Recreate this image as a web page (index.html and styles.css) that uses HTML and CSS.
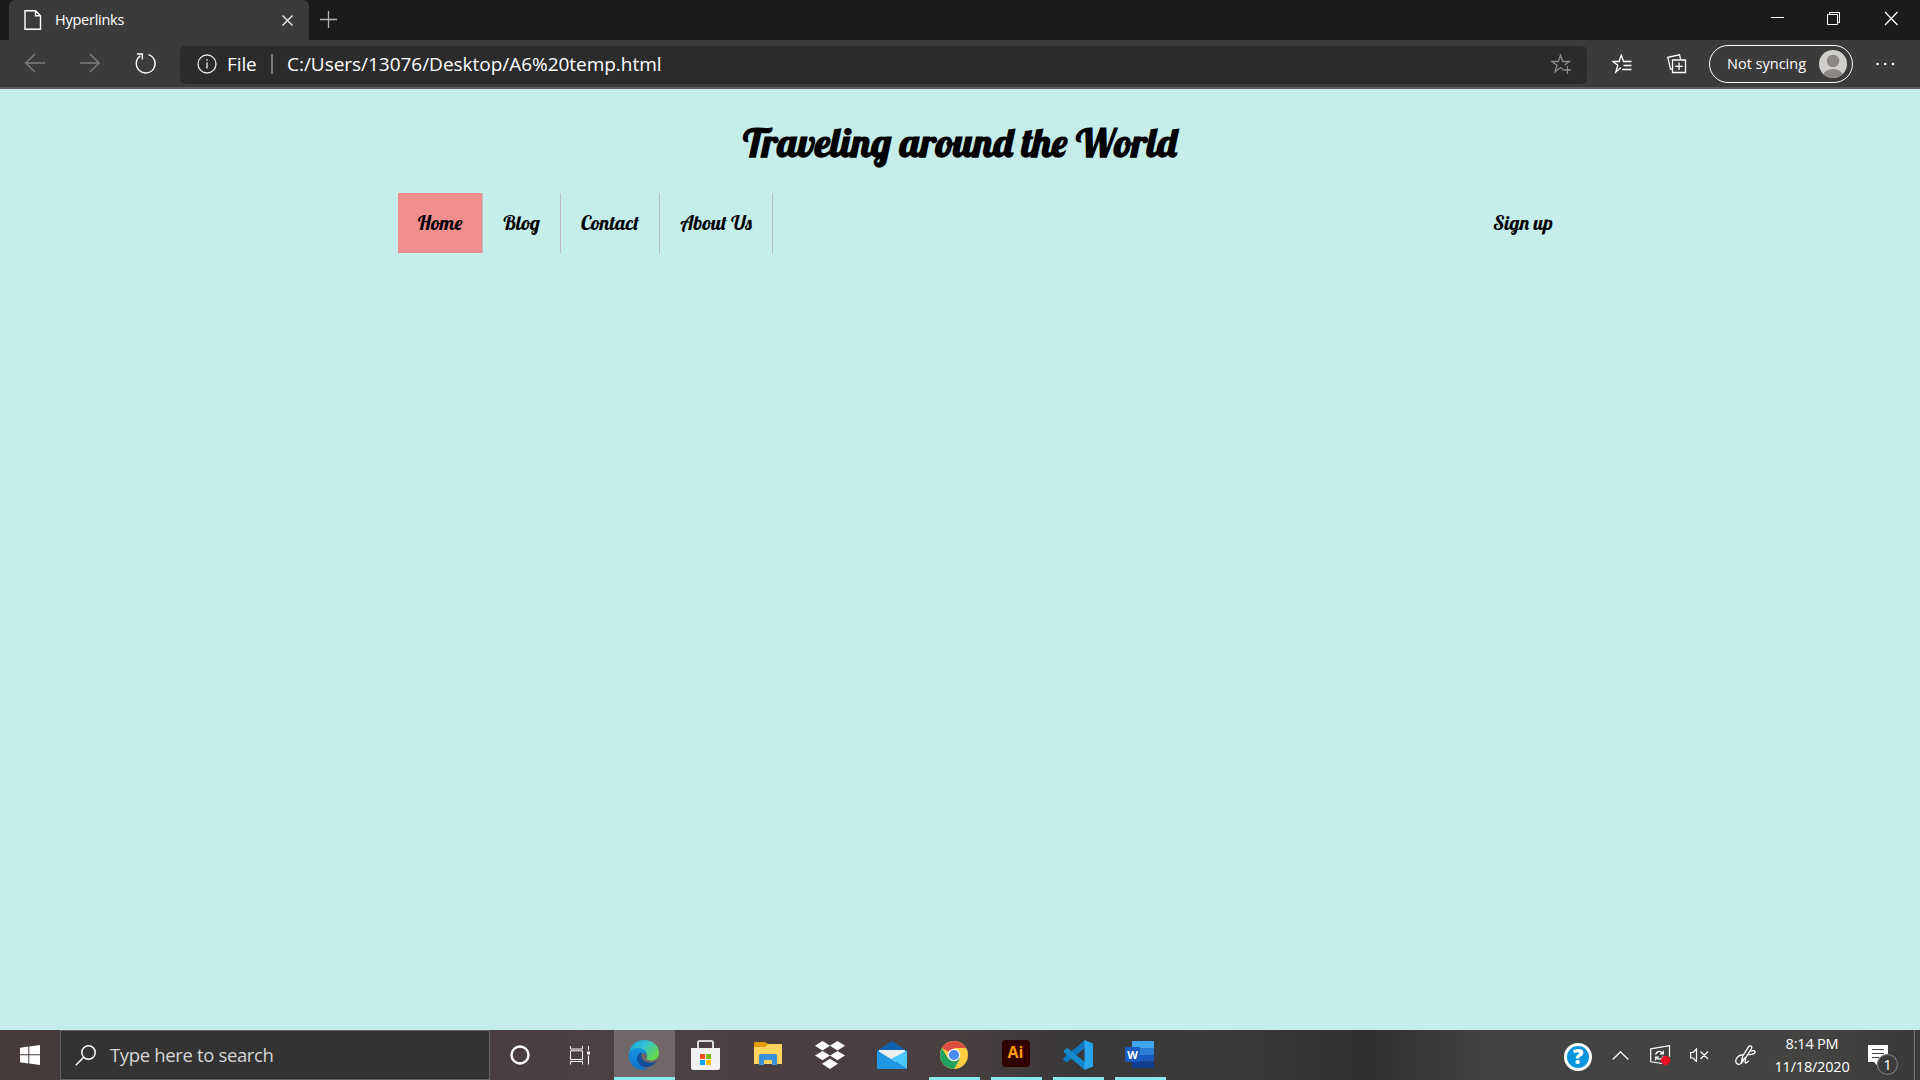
FILE: index.html
```html
<!DOCTYPE html>
<html lang="en">
<head>
<meta charset="utf-8">
<title>Hyperlinks</title>
<link rel="stylesheet" href="styles.css">
</head>
<body>
<header class="tabstrip">
  <div class="tab">
    <svg class="tab-icon" width="18" height="20" viewBox="0 0 18 20"><path d="M1 .8h10.5l5 5V19.2H1zM11.5.8v5h5" fill="none" stroke="#fff" stroke-width="1.4"/></svg>
    <span class="tab-title">Hyperlinks</span>
    <svg class="tab-close" width="11" height="11" viewBox="0 0 11 11"><path d="M.5.5l10 10M10.500.500l-10 10" stroke="#f2f2f2" stroke-width="1.3"/></svg>
  </div>
  <svg class="new-tab" width="17" height="17" viewBox="0 0 17 17"><path d="M0 8.500h17M8.500 0v17" stroke="#b4b4b4" stroke-width="1.3"/></svg>
  <div class="window-controls">
    <svg width="57" height="40" viewBox="0 0 57 40"><path d="M22 17.500h13" stroke="#fff"/></svg>
    <svg width="57" height="40" viewBox="0 0 57 40"><path d="M21.500 14.500h10v10h-10zM23.500 14v-1.500h10v10H32" fill="none" stroke="#fff"/></svg>
    <svg width="57" height="40" viewBox="0 0 57 40"><path d="M22 12l12.500 13M34.500 12L22 25" stroke="#fff" stroke-width="1.200"/></svg>
  </div>
</header>
<div class="toolbar">
  <svg class="tool" width="55" height="47" viewBox="0 0 55 47"><path d="M37 23H17.500M27 14l-9.200 9 9.200 9" fill="none" stroke="#7d7d7d" stroke-width="1.400"/></svg>
  <svg class="tool" width="55" height="47" viewBox="0 0 55 47"><path d="M17 23h19.500M27 14l9.200 9-9.200 9" fill="none" stroke="#7d7d7d" stroke-width="1.400"/></svg>
  <svg class="tool" width="55" height="47" viewBox="0 0 55 47"><path d="M30.500 14.600a9.400 9.400 0 1 1-8.200 1.300M19 14h5.300v5.600" fill="none" stroke="#fff" stroke-width="1.400"/></svg>
  <div class="address">
    <svg class="info" width="20" height="20" viewBox="0 0 20 20"><circle cx="10" cy="10" r="9" fill="none" stroke="#e8e8e8" stroke-width="1.300"/><path d="M10 8.500v6M10 5.200v1.600" stroke="#e8e8e8" stroke-width="1.400"/></svg>
    <span class="scheme">File</span>
    <span class="divider"></span>
    <span class="url">C:/Users/13076/Desktop/A6%20temp.html</span>
    <svg class="add-favorite" width="20" height="20" viewBox="0 0 20 20"><path d="M12.500 16L9.500 13.500 4 18l2-6.700L.8 7.500h6.500L9.500 1l2.200 6.500h6.500l-4.500 3.500M16.500 12v8M12.500 16h7.500" fill="none" stroke="#8b8b8b" stroke-width="1.300"/></svg>
  </div>
  <svg class="favorites" width="20" height="20" viewBox="0 0 20 20"><path d="M9 13.500L3.800 18l2-6.700L.8 7.500h6.300L9.300 1l2.200 6.500H19.500M11.500 11.500h8M10 15.500h9.500" fill="none" stroke="#fff" stroke-width="1.300"/></svg>
  <svg class="collections" width="20" height="20" viewBox="0 0 20 20"><path d="M5.500 6h13v12.500h-13zM12 8.500v7.500M8.200 12.300h7.600M5 15.200H3.500L.8 3.300 12.500.8l1 4" fill="none" stroke="#fff" stroke-width="1.300"/></svg>
  <div class="profile">
    <span class="profile-label">Not syncing</span>
    <svg width="28" height="28" viewBox="0 0 28 28"><defs><clipPath id="avatar"><circle cx="14" cy="14" r="14"/></clipPath></defs><g clip-path="url(#avatar)"><path d="M0 0h28v28H0z" fill="#d0cecb"/><circle cx="14" cy="11" r="6.200" fill="#8b8785"/><ellipse cx="14" cy="26" rx="10" ry="7" fill="#8b8785"/></g></svg>
  </div>
  <svg class="more" width="19" height="4" viewBox="0 0 19 4"><circle cx="1.600" cy="2" r="1.300" fill="#fff"/><circle cx="9.200" cy="2" r="1.300" fill="#fff"/><circle cx="16.900" cy="2" r="1.300" fill="#fff"/></svg>
</div>
<main class="page">
  <h1 class="heading">Traveling around the World</h1>
  <nav class="menu">
    <a class="menu-item home">Home</a>
    <a class="menu-item blog">Blog</a>
    <a class="menu-item contact">Contact</a>
    <a class="menu-item about">About Us</a>
    <a class="menu-item signup">Sign up</a>
  </nav>
</main>
<footer class="taskbar">
  <div class="start"><svg width="20" height="20" viewBox="0 0 20 20"><path d="M0 2.800L8.300 1.600V9.300H0zM9.300 1.500L20 0v9.300H9.300zM0 10.300h8.300V18.400L0 17.300zM9.300 10.300H20V20L9.300 18.600z" fill="#fff"/></svg></div>
  <div class="search">
    <svg width="21" height="21" viewBox="0 0 21 21"><circle cx="13.500" cy="7.500" r="6.700" fill="none" stroke="#fff" stroke-width="1.500"/><path d="M8.700 12.300L.7 20.300" stroke="#fff" stroke-width="1.500"/></svg>
    <span class="search-text">Type here to search</span>
  </div>
  <div class="task cortana"><svg width="20" height="20" viewBox="0 0 20 20"><circle cx="10" cy="10" r="8.500" fill="none" stroke="#fff" stroke-width="2.400"/></svg></div>
  <div class="task view"><svg width="21" height="20" viewBox="0 0 21 20"><path d="M.5 1v3h12V1M.5 5.800h12v8.700H.5zM.5 19.500v-3h12v3M18.500 1v4M18.500 10.500v9" fill="none" stroke="#fff"/><path d="M17 6.500h3v3h-3z" fill="#fff"/></svg></div>
  <div class="app active">
    <svg width="30" height="30" viewBox="0 0 30 30"><defs><linearGradient id="edge-top" x1="0" y1="0" x2="1" y2=".6"><stop offset="0" stop-color="#159bd8"/><stop offset=".5" stop-color="#35c2d2"/><stop offset="1" stop-color="#66db49"/></linearGradient><linearGradient id="edge-side" x1="0" y1="0" x2="0" y2="1"><stop offset="0" stop-color="#1595df"/><stop offset="1" stop-color="#0872c9"/></linearGradient></defs><path d="M0 14C1 5 7 0 15 0c9 0 15 6 15 13 0 5-4 7.500-8 7.500-3 0-5-1-4.700-2.200 1.600-1.300 1.200-6.300-2.300-7.300C9 7 3 9 0 14z" fill="url(#edge-top)"/><path d="M0 16C0 10 5 8 9 8c5 0 9 3 9 7-2-3-7-2-8 2-.8 5 2 11 9 12C9 32 0 26 0 16z" fill="url(#edge-side)"/><path d="M13 12c-5 2-7 8-2 13 5 4.500 13 2 17-4-4 2.500-12 2.500-15-2.500-1-2-1-4.500 0-6.500z" fill="#114d9b"/></svg>
  </div>
  <div class="app">
    <svg width="29" height="30" viewBox="0 0 29 30"><path d="M7 9V2.500Q7 1 8.500 1h12Q22 1 22 2.500V9" fill="none" stroke="#d8d8d8" stroke-width="2"/><path d="M0 8h29v20q0 2-2 2H2q-2 0-2-2z" fill="#f2f2f2"/><path d="M9 14h5v5H9z" fill="#f25022"/><path d="M15 14h5v5h-5z" fill="#7fba00"/><path d="M9 20h5v5H9z" fill="#00a4ef"/><path d="M15 20h5v5h-5z" fill="#ffb900"/></svg>
  </div>
  <div class="app">
    <svg class="raise" width="28" height="24" viewBox="0 0 28 24"><path d="M0 1q0-1 1-1h10l3 2h13q1 0 1 1v5H0z" fill="#e09c00"/><path d="M0 5h11l3-3h13q1 0 1 1v19H0z" fill="#ffd45e"/><path d="M5 23V13.500Q5 12 6.500 12h15q1.500 0 1.500 1.500V23h-5v-5h-8v5z" fill="#3b92d7"/></svg>
  </div>
  <div class="app">
    <svg width="30" height="28" viewBox="0 0 30 28"><path d="M7.500 0l7.500 4.700L7.500 9.400 0 4.700zM22.500 0L30 4.700l-7.500 4.700L15 4.700zM7.500 9.900l7.500 4.700-7.500 4.700L0 14.600zM22.500 9.900l7.500 4.700-7.500 4.700-7.500-4.700zM15 17.800l8 5L15 28l-8-5.200z" fill="#fff"/></svg>
  </div>
  <div class="app">
    <svg width="30" height="28" viewBox="0 0 30 28"><path d="M0 10L14 .5q1-.7 2 0L30 10v5H0z" fill="#1060b0"/><path d="M2 9h26v12H2z" fill="#f0f0f0"/><path d="M0 9.500L15 19 0 28z" fill="#229be5"/><path d="M30 9.500V28L14 18z" fill="#48c8ff"/><path d="M0 28V9.500L30 28z" fill="#1e97e4"/></svg>
  </div>
  <div class="app running">
    <svg width="28" height="28" viewBox="0 0 28 28"><circle cx="14" cy="14" r="14" fill="#ffcd40"/><path d="M14 14L1.900 7A14 14 0 0 1 26.100 7H14z" fill="#dc4e41"/><path d="M1.900 7A14 14 0 0 0 14 28l6.100-10.500L8 17.500z" fill="#20a15f"/><circle cx="14" cy="14" r="6.300" fill="#f4f4f4"/><circle cx="14" cy="14" r="5.100" fill="#4b8bf4"/></svg>
  </div>
  <div class="app running"><span class="illustrator">Ai</span></div>
  <div class="app running">
    <svg width="30" height="30" viewBox="0 0 30 30"><path d="M22 8L3.500 22.500 0 19.500Q0 18.500 1 17.500L22 0z" fill="#0b77bf"/><path d="M1 12.500Q0 11.500 1 10.500l2-2q1-.7 2 0L22 22v8z" fill="#1589ce"/><path d="M21.500 0L30 3.500v23L21.500 30z" fill="#27a5ed"/></svg>
  </div>
  <div class="app running">
    <svg class="word" width="30" height="27" viewBox="0 0 30 27"><path d="M7 1q0-1 1-1h20q1 0 1 1v6H7z" fill="#41a5ee"/><path d="M7 7h22v7H7z" fill="#2b7cd3"/><path d="M7 14h22v6.500H7z" fill="#185abd"/><path d="M7 20.500h22V26q0 1-1 1H8q-1 0-1-1z" fill="#103f91"/><rect x="0" y="6" width="15" height="15" rx="1.200" fill="#185abd"/><text class="word-letter" x="7.500" y="17.500" text-anchor="middle">W</text></svg>
  </div>
  <div class="tray">
    <div class="help">?</div>
    <svg class="chevron" width="17" height="9" viewBox="0 0 17 9"><path d="M.7 8.500l7.800-7.700 7.800 7.700" fill="none" stroke="#fff" stroke-width="1.300"/></svg>
    <svg class="update" width="21" height="21" viewBox="0 0 21 21"><path d="M12 18.500L.7 16.800V3.800L19.500.7v11" fill="none" stroke="#fff" stroke-width="1.200"/><path d="M5.500 9.500Q7 6 10.500 6.500l2.500 2M13.300 5.500v3.300H10M13.500 11q-2 4-5.500 3l-2-1.500M5.700 15.500v-3.300H9" fill="none" stroke="#fff" stroke-width="1.200"/><circle cx="15.500" cy="15.500" r="4.700" fill="#e81123"/></svg>
    <svg class="volume" width="19" height="14" viewBox="0 0 19 14"><path d="M.6 4.500h2.500L6.500 1v12.500L3.100 10H.6zM10.500 3.500l7.500 7.500M18 3.500L10.500 11" fill="none" stroke="#fff" stroke-width="1.200"/></svg>
    <svg class="pen" width="21" height="21" viewBox="0 0 21 21"><path d="M6.500 16.500L7.500 11.500 13.500 1.800q1-1.500 2.500-.7 1.300 1 .5 2.400L10.500 13zM7.500 9.500C2.500 10.500.5 14 .8 16.500c.5 3.800 5 3.800 6.700.5 1.500-3 2-5 3-4 .8 1-1.500 4.500 0 5 1.500.3 2-1.500 3.500-2M14.500 6.500c3-1.500 6-1 5.500.8-.5 1.700-4 2.700-6.500 2.200" fill="none" stroke="#fff" stroke-width="1.300"/></svg>
    <div class="clock"><span class="time">8:14 PM</span><span class="date">11/18/2020</span></div>
    <svg class="notifications" width="32" height="34" viewBox="0 0 32 34"><path d="M0 0h20v17H9.500v4L6 17H0z" fill="#fff"/><path d="M4 4.500h12M4 8.500h12M4 12.500h7" stroke="#444" stroke-width="1.200"/><circle cx="19.500" cy="19.500" r="10" fill="#3c3c3c" stroke="#777" stroke-width="1.200"/><text class="badge-count" x="19.500" y="25" text-anchor="middle">1</text></svg>
    <span class="show-desktop"></span>
  </div>
</footer>
</body>
</html>
```
FILE: styles.css
```css
* { box-sizing: border-box; }
body {
  margin: 0;
  width: 1920px;
  height: 1080px;
  overflow: hidden;
  display: flex;
  flex-direction: column;
  font-family: "Segoe UI", "Open Sans", sans-serif;
  color: #fff;
}
svg { display: block; flex: none; }
span { white-space: nowrap; }

.tabstrip { height: 40px; display: flex; background: #1b1b1b; padding-left: 9px; flex: none; }
.tab { width: 300px; height: 40px; display: flex; align-items: center; background: #3b3b3b; border-radius: 6px 6px 0 0; padding: 0 16px 0 15px; }
.tab-title { font-size: 14.500px; letter-spacing: -.25px; margin: 0 0 2px 13px; }
.tab-close { margin-left: auto; }
.new-tab { margin: 11px 0 0 11px; }
.window-controls { display: flex; margin-left: auto; }

.toolbar { height: 49px; display: flex; align-items: center; background: #3b3b3b; border-bottom: 2px solid #5b5b5b; padding-left: 8px; flex: none; }
.address { width: 1407px; height: 38px; margin: 2px 0 0 7px; padding: 0 16px 2px 17px; display: flex; align-items: center; background: #2b2b2b; border-radius: 5px; font-size: 19px; }
.scheme { margin-left: 10px; width: 34px; letter-spacing: -.1px; }
.divider { width: 2px; height: 20px; background: #777; margin: 0 14px 0 10px; }
.url { letter-spacing: -.03px; }
.add-favorite { margin-left: auto; }
.favorites { margin: 1px 0 0 25px; }
.collections { margin: 1px 0 0 35px; }
.profile { width: 144px; height: 38px; margin-left: 22px; display: flex; align-items: center; justify-content: space-between; border: 1.500px solid #fff; border-radius: 19px; padding: 0 5px 0 17px; }
.profile-label { font-size: 14.500px; }
.more { margin-left: 23px; }

.page { flex: 1; background: #c5eeeb; color: #000; font-family: Lobster, "Liberation Serif", serif; }
.heading { height: 104px; margin: 0; padding-top: 28px; text-align: center; font-size: 40px; line-height: 50px; font-weight: 700; }
.menu { width: 1175px; height: 60px; margin-left: 398px; display: flex; }
.menu-item { border-right: 1px solid #bbb; text-align: center; font-size: 20px; line-height: 60px; white-space: nowrap; }
.home { width: 85px; background: #f28e8e; }
.blog { width: 78px; }
.contact { width: 99px; }
.about { width: 113px; }
.signup { margin-left: auto; width: 100px; border: 0; }

.taskbar { height: 50px; flex: none; display: flex; background: linear-gradient(90deg, #463a3b 0, #493d3f 500px, #4b4042 600px, #493f40 850px, #493f40 950px, #393838 1080px, #3b3b3a 1200px, #303030 1370px, #434341 1490px, #434341 1820px, #393939 100%); }
.start { width: 60px; display: flex; align-items: center; padding-left: 20px; }
.search { width: 430px; border: 1px solid #626262; background: #333; display: flex; align-items: center; padding-left: 14px; }
.search-text { margin: 0 0 2px 14px; font-size: 18.500px; letter-spacing: -.35px; color: #d6d6d6; }
.task { width: 60px; display: flex; align-items: center; justify-content: center; }
.view { width: 64px; padding-right: 4px; }
.app { width: 62px; height: 50px; padding-right: 3px; display: flex; align-items: center; justify-content: center; }
.active { width: 61px; margin-right: 1px; padding: 3px 1px 0 0; background: #706769; border-bottom: 3px solid #8be7f0; }
.raise { margin-bottom: 2px; }
.running { width: 51px; margin: 0 6px 0 5px; padding: 3px 2px 0 0; border-bottom: 3px solid #8be7f0; }
.illustrator { width: 28px; height: 27px; margin-bottom: 3px; border-radius: 4px; background: #300; color: #ff9a00; font: 700 16px/25px "Open Sans", sans-serif; text-align: center; }
.word { margin-bottom: 1px; }
.word-letter { font: 700 11px "Open Sans", sans-serif; fill: #fff; }

.tray { flex: 1; display: flex; align-items: center; }
.help { width: 28px; height: 28px; margin: 3px 0 0 392px; border: 3px solid #fff; border-radius: 50%; background: #0795de; font: 800 21px/21px "Open Sans", sans-serif; text-align: center; }
.chevron { margin-left: 20px; }
.update { margin-left: 21px; }
.volume { margin-left: 19px; }
.pen { margin-left: 26px; }
.clock { width: 80px; margin-left: 16px; display: flex; flex-direction: column; align-items: center; font-size: 14.500px; line-height: 23px; letter-spacing: -.2px; }
.notifications { margin: 14px 0 0 16px; }
.badge-count { font: 15px "Open Sans", sans-serif; fill: #fff; }
.show-desktop { margin-left: auto; margin-right: 5px; width: 1px; height: 50px; background: #777; }
```
